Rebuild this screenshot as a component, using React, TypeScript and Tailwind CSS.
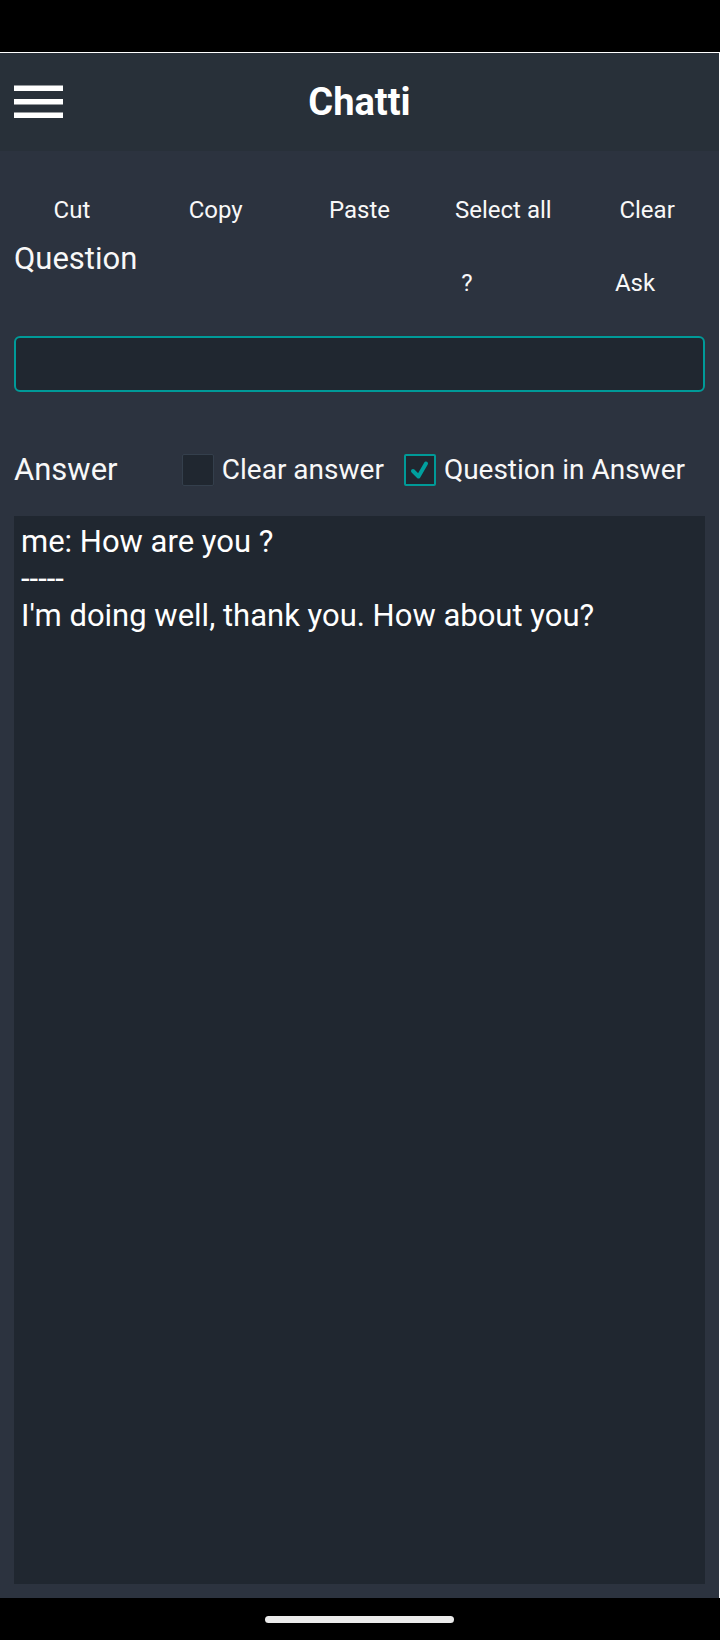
import { useState } from "react";

const editActions = ["Cut", "Copy", "Paste", "Select all", "Clear"];

type CheckProps = {
  id: string;
  label: string;
  checked: boolean;
  onChange: (value: boolean) => void;
};

function Check({ id, label, checked, onChange }: CheckProps) {
  return (
    <div className="flex items-center gap-2">
      <span className="grid size-8 shrink-0 place-items-center">
        <input
          id={id}
          type="checkbox"
          checked={checked}
          onChange={(e) => onChange(e.target.checked)}
          className="col-start-1 row-start-1 size-8 appearance-none rounded-xs border border-[#343f4c] bg-[#202730] checked:border-2 checked:border-[#009a98]"
        />
        {checked && (
          <svg
            viewBox="0 0 32 32"
            className="pointer-events-none col-start-1 row-start-1 size-8"
            fill="none"
            stroke="#00a09e"
            strokeWidth="4"
            strokeLinecap="round"
            aria-hidden="true"
          >
            <path d="M9 17 L14.500 22.500 L22 9.500" strokeLinejoin="round" />
          </svg>
        )}
      </span>
      <label htmlFor={id} className="text-[28px] leading-8 whitespace-nowrap">
        {label}
      </label>
    </div>
  );
}

export default function App() {
  const [question, setQuestion] = useState("");
  const [clearAnswer, setClearAnswer] = useState(false);
  const [echoQuestion, setEchoQuestion] = useState(true);
  const answer = "me: How are you ?\n-----\nI'm doing well, thank you. How about you?";

  return (
    <div className="flex min-h-screen flex-col bg-black font-['Roboto',sans-serif] text-[#f8f8f8]">
      <div className="h-[52px]" />
      <div className="flex grow flex-col border-t border-r border-white bg-[#2c333f]">
        <header className="grid h-[98px] grid-cols-[1fr_auto_1fr] items-center bg-[#283039] px-3.5">
          <button type="button" aria-label="Menu" className="w-fit">
            <svg viewBox="0 0 49 34" className="h-[34px] w-[49px]" fill="#ffffff" aria-hidden="true">
              <rect x="0" y="0.500" width="49" height="5.500" />
              <rect x="0" y="14" width="49" height="5.500" />
              <rect x="0" y="27.500" width="49" height="5.500" />
            </svg>
          </button>
          <h1 className="text-[38px] leading-10 font-bold text-white">Chatti</h1>
        </header>

        <main className="flex grow flex-col pt-6 pb-3.5">
          <div className="grid grid-cols-5">
            {editActions.map((name) => (
              <button key={name} type="button" className="h-[70px] text-2xl">
                {name}
              </button>
            ))}
          </div>

          <div className="flex h-[75px] pl-3.5">
            <label htmlFor="question" className="grow text-[31px] leading-7">
              Question
            </label>
            <button type="button" className="h-[75px] w-[168px] text-2xl">
              ?
            </button>
            <button type="button" className="h-[75px] w-[168px] text-2xl">
              Ask
            </button>
          </div>

          <div className="mt-4 px-3.5">
            <input
              id="question"
              type="text"
              value={question}
              onChange={(e) => setQuestion(e.target.value)}
              className="block h-14 w-full rounded-md border-2 border-[#009a98] bg-[#202730] px-2 text-[31px] outline-none"
            />
          </div>

          <div className="mt-14 flex items-center pr-[34px] pl-3.5">
            <label htmlFor="answer" className="grow text-[31px] leading-[44px]">
              Answer
            </label>
            <div className="flex gap-5">
              <Check id="clear-answer" label="Clear answer" checked={clearAnswer} onChange={setClearAnswer} />
              <Check
                id="question-in-answer"
                label="Question in Answer"
                checked={echoQuestion}
                onChange={setEchoQuestion}
              />
            </div>
          </div>

          <div className="mt-6 flex grow px-3.5">
            <textarea
              id="answer"
              readOnly
              value={answer}
              className="w-full resize-none bg-[#202730] p-[7px] text-[31px] leading-[37px] text-white outline-none"
            />
          </div>
        </main>
      </div>
      <div className="flex h-[42px] items-center justify-center pr-px">
        <div className="h-[7px] w-[189px] rounded-full bg-[#ebebeb]" />
      </div>
    </div>
  );
}
